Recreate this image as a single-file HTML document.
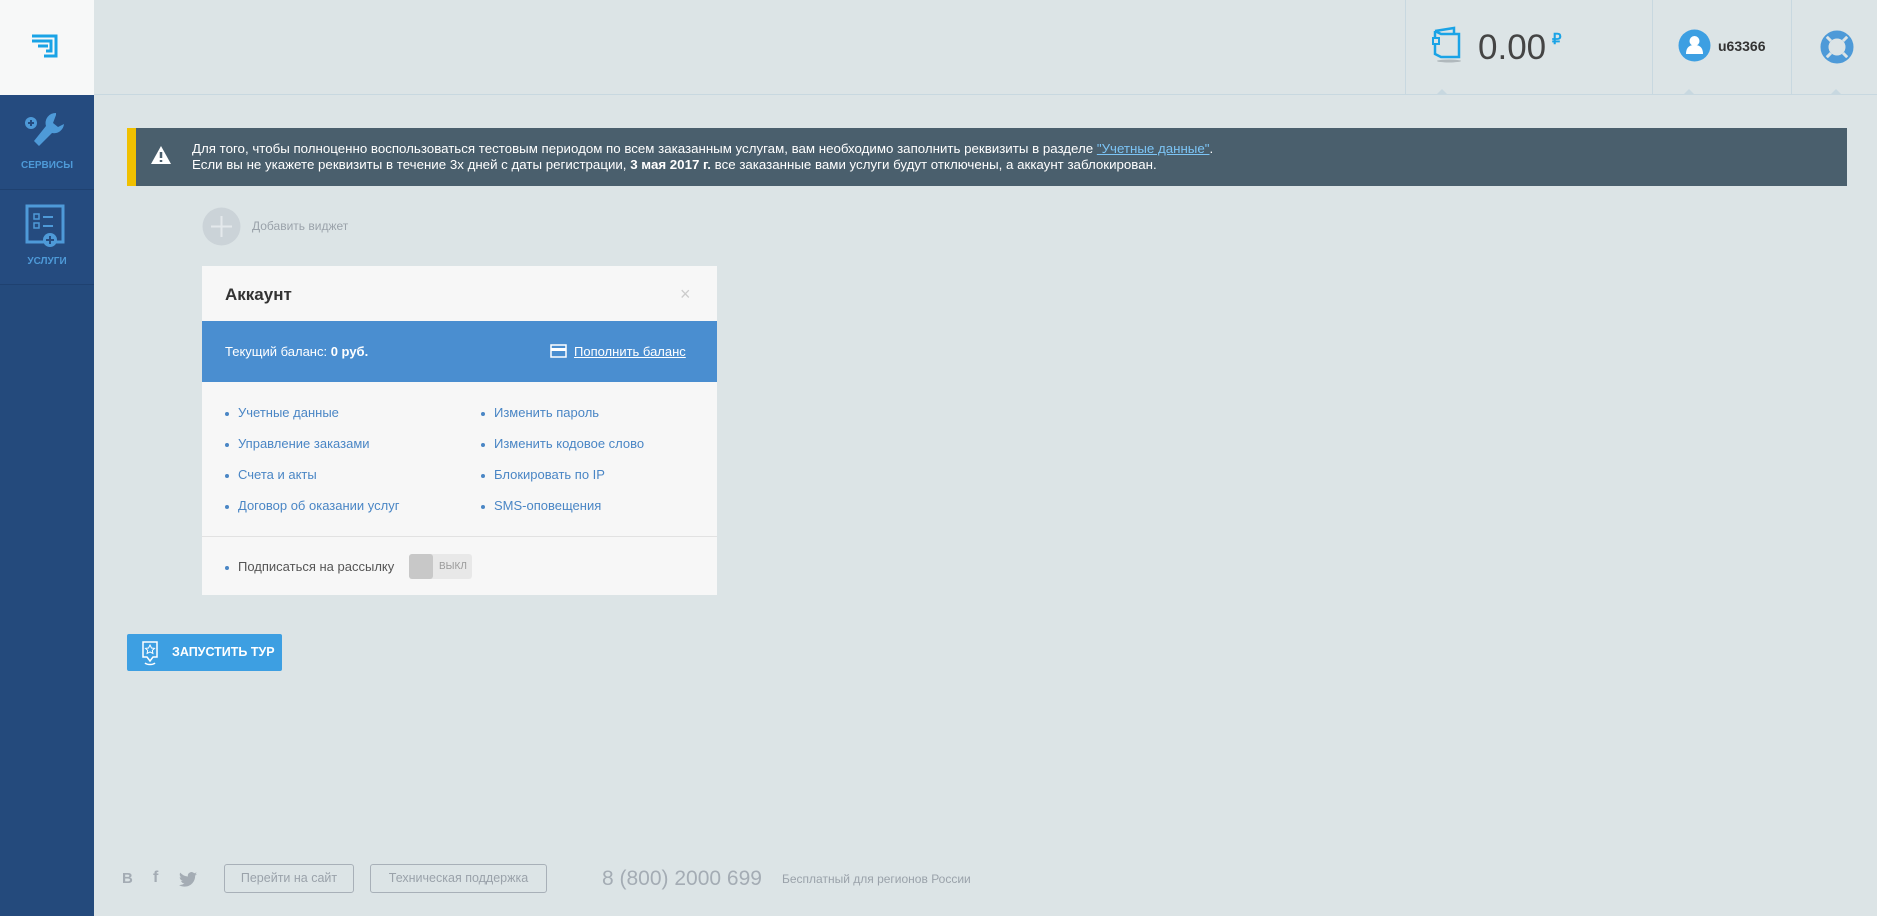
<!DOCTYPE html><html><head><meta charset="utf-8"><style>
*{margin:0;padding:0;box-sizing:border-box}
body{width:1877px;height:916px;background:#dce4e6;font-family:"Liberation Sans",sans-serif;position:relative;overflow:hidden}
.a{position:absolute}
#sb{left:0;top:0;width:94px;height:916px;background:#244a7c}
#logo{left:0;top:0;width:94px;height:95px;background:#f7f8f8}
.item{left:0;width:94px;height:95px;border-bottom:1px solid #1f4170;background:#254b7f;color:#4e9ad8;font-size:10px;font-weight:bold;text-align:center}
#hdr{left:94px;top:0;right:0;height:95px;border-bottom:1px solid #c8d8e0}
.div{top:0;width:1px;height:95px;background:#c8d8e0}
.tri{top:89px;width:0;height:0;border-left:6px solid transparent;border-right:6px solid transparent;border-bottom:6px solid #c8d8e0}
#alert{left:127px;top:128px;width:1720px;height:58px;background:#4a5f6d;border-left:9px solid #f0c000;color:#fff;font-size:13.3px;line-height:16px;padding:13px 0 0 56px}
#alert u{color:#7cc4f5}
#card{left:202px;top:266px;width:515px;height:329px;background:#f7f7f7}
.li{position:absolute;font-size:13px;color:#4a86c5}
.li:before{content:"";position:absolute;left:-13px;top:7px;width:4px;height:4px;border-radius:2px;background:#4a86c5}
.fb{top:864px;height:29px;border:1px solid #a8b0b8;border-radius:3px;color:#9aa2aa;font-size:12.5px;text-align:center;line-height:27px}
</style></head><body>
<div id="sb" class="a"></div>
<div id="logo" class="a"><svg class="a" style="left:30px;top:34px" width="30" height="24" viewBox="0 0 30 24"><path d="M2 2H26V22H14M2 7H21V17H16M8 12H18" fill="none" stroke="#1aa3e6" stroke-width="3"/></svg></div>
<div class="a item" style="top:95px"><svg class="a" style="left:22px;top:16px" width="46" height="40" viewBox="0 0 46 40"><circle cx="9" cy="12" r="6" fill="#4e9ad8"/><path d="M9 9v6M6 12h6" stroke="#254b7f" stroke-width="2"/><path d="M34 2a10 10 0 0 0-10 13L12 30l5 5 13-13a10 10 0 0 0 12-9l-6 3-5-4 3-8z" fill="#4e9ad8"/></svg><div class="a" style="top:65px;width:94px">СЕРВИСЫ</div></div>
<div class="a item" style="top:190px"><svg class="a" style="left:25px;top:14px" width="44" height="46" viewBox="0 0 44 46"><rect x="2" y="2" width="36" height="36" fill="none" stroke="#4e9ad8" stroke-width="3"/><rect x="9" y="10" width="5" height="5" fill="none" stroke="#4e9ad8" stroke-width="1.5"/><rect x="9" y="19" width="5" height="5" fill="none" stroke="#4e9ad8" stroke-width="1.5"/><path d="M18 13h10M18 22h10" stroke="#4e9ad8" stroke-width="2"/><circle cx="25" cy="36" r="7" fill="#4e9ad8"/><path d="M25 32v8M21 36h8" stroke="#254b7f" stroke-width="2"/></svg><div class="a" style="top:66px;width:94px">УСЛУГИ</div></div>
<div id="hdr" class="a"></div>
<div class="a div" style="left:1405px"></div><div class="a div" style="left:1652px"></div><div class="a div" style="left:1791px"></div>
<div class="a tri" style="left:1436px"></div><div class="a tri" style="left:1683px"></div><div class="a tri" style="left:1830px"></div>
<svg class="a" style="left:1432px;top:26px" width="32" height="38" viewBox="0 0 32 38"><path d="M3 5L22 2V8M3 5V28L9 31H27V8H9L3 5" fill="none" stroke="#1aa3e6" stroke-width="2.5"/><rect x="1" y="12" width="6" height="6" fill="#dce4e6" stroke="#1aa3e6" stroke-width="2"/><ellipse cx="17" cy="35" rx="12" ry="1.5" fill="#b0b8bc"/></svg>
<div class="a" style="left:1478px;top:28px;font-size:35px;color:#444">0.00</div>
<div class="a" style="left:1552px;top:30px;font-size:15px;color:#1aa3e6;font-weight:bold">₽</div>
<svg class="a" style="left:1678px;top:29px" width="33" height="33"><circle cx="16.5" cy="16.5" r="16" fill="#3d9fe2"/><circle cx="16.5" cy="12" r="5" fill="#fff"/><path d="M8 25c0-7 4-9 8.5-9s8.5 2 8.5 9z" fill="#fff"/></svg>
<div class="a" style="left:1718px;top:38px;font-size:14px;font-weight:bold;color:#333">u63366</div>
<svg class="a" style="left:1820px;top:30px" width="34" height="34" viewBox="0 0 34 34"><circle cx="17" cy="17" r="12" fill="none" stroke="#4e9ad8" stroke-width="7"/><g stroke="#dce4e6" stroke-width="3"><path d="M6 6l5 5M28 6l-5 5M6 28l5-5M28 28l-5-5"/></g><circle cx="17" cy="17" r="15.5" fill="none" stroke="#4e9ad8" stroke-width="2"/></svg>
<div id="alert" class="a"><svg class="a" style="left:14px;top:17px" width="22" height="20" viewBox="0 0 22 20"><path d="M11 1L21 19H1z" fill="#fff"/><path d="M11 7v6M11 15v2" stroke="#4a5f6d" stroke-width="2.5"/></svg>Для того, чтобы полноценно воспользоваться тестовым периодом по всем заказанным услугам, вам необходимо заполнить реквизиты в разделе <u>"Учетные данные"</u>.<br>Если вы не укажете реквизиты в течение 3х дней с даты регистрации, <b>3 мая 2017 г.</b> все заказанные вами услуги будут отключены, а аккаунт заблокирован.</div>
<svg class="a" style="left:202px;top:207px" width="39" height="39"><circle cx="19.5" cy="19.5" r="19" fill="#cbd3d8"/><path d="M19.5 9v21M9 19.5h21" stroke="#e4e9ec" stroke-width="2"/></svg>
<div class="a" style="left:252px;top:219px;font-size:12px;color:#9aa2aa">Добавить виджет</div>
<div id="card" class="a">
<div class="a" style="left:23px;top:19px;font-size:17px;font-weight:bold;color:#333">Аккаунт</div>
<div class="a" style="left:478px;top:18px;font-size:18px;color:#ccc">×</div>
<div class="a" style="left:0;top:55px;width:515px;height:61px;background:#4a8ed0;color:#fff;font-size:13px">
<div class="a" style="left:23px;top:23px">Текущий баланс: <b>0 руб.</b></div>
<svg class="a" style="left:348px;top:23px" width="17" height="14"><rect x="1" y="1" width="15" height="12" fill="none" stroke="#fff" stroke-width="1.5"/><rect x="1" y="4" width="15" height="3" fill="#fff"/></svg>
<div class="a" style="left:372px;top:23px;text-decoration:underline">Пополнить баланс</div></div>
<div class="li" style="left:36px;top:139px">Учетные данные</div>
<div class="li" style="left:36px;top:170px">Управление заказами</div>
<div class="li" style="left:36px;top:201px">Счета и акты</div>
<div class="li" style="left:36px;top:232px">Договор об оказании услуг</div>
<div class="li" style="left:292px;top:139px">Изменить пароль</div>
<div class="li" style="left:292px;top:170px">Изменить кодовое слово</div>
<div class="li" style="left:292px;top:201px">Блокировать по IP</div>
<div class="li" style="left:292px;top:232px">SMS-оповещения</div>
<div class="a" style="left:0;top:270px;width:515px;height:1px;background:#e2e2e2"></div>
<div class="li" style="left:36px;top:293px;color:#555">Подписаться на рассылку</div>
<div class="a" style="left:207px;top:288px;width:63px;height:25px;background:#e8e8e8;border-radius:3px"><div class="a" style="left:0;top:0;width:24px;height:25px;background:#c8c8c8;border-radius:3px"></div><div class="a" style="left:30px;top:7px;font-size:10px;color:#999">ВЫКЛ</div></div>
</div>
<div class="a" style="left:127px;top:634px;width:155px;height:37px;background:#3d9fe2;border-radius:2px;color:#fff;font-size:12.5px;font-weight:bold;line-height:37px;padding-left:45px">ЗАПУСТИТЬ ТУР<svg class="a" style="left:13px;top:6px" width="20" height="26" viewBox="0 0 20 26"><path d="M3 2h14v15h-4l-3 4-3-4H3z" fill="none" stroke="#fff" stroke-width="1.5"/><path d="M10 5l1.5 3 3 .4-2.2 2 .6 3-2.9-1.5-2.9 1.5.6-3-2.2-2 3-.4z" fill="none" stroke="#fff" stroke-width="1"/><path d="M5 23c2 2 8 2 10 0" fill="none" stroke="#fff" stroke-width="1.5"/></svg></div>
<div class="a" style="left:122px;top:870px;font-size:15px;font-weight:bold;color:#a4acb4">B</div>
<div class="a" style="left:153px;top:869px;font-size:16px;font-weight:bold;color:#a4acb4">f</div>
<svg class="a" style="left:179px;top:872px" width="18" height="15" viewBox="0 0 24 20"><path d="M24 2.4c-.9.4-1.8.7-2.8.8 1-.6 1.8-1.6 2.2-2.7-1 .6-2 1-3.1 1.2A4.9 4.9 0 0 0 11.9 6 14 14 0 0 1 1.7.9a4.9 4.9 0 0 0 1.5 6.6c-.8 0-1.6-.3-2.2-.6 0 2.4 1.7 4.4 3.9 4.8-.7.2-1.5.2-2.2.1.6 2 2.4 3.4 4.6 3.4A9.9 9.9 0 0 1 0 17.3 14 14 0 0 0 7.5 19.5c9 0 14-7.5 14-14v-.6c1-.7 1.8-1.6 2.5-2.5z" fill="#a4acb4"/></svg>
<div class="a fb" style="left:224px;width:130px">Перейти на сайт</div>
<div class="a fb" style="left:370px;width:177px">Техническая поддержка</div>
<div class="a" style="left:602px;top:867px;font-size:21px;color:#a4acb4">8 (800) 2000 699</div>
<div class="a" style="left:782px;top:872px;font-size:12px;color:#9aa2aa">Бесплатный для регионов России</div>
</body></html>
